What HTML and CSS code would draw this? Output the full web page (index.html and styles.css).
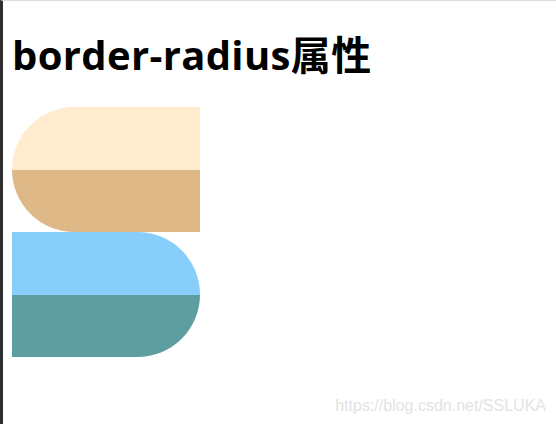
FILE: index.html
```html
<!DOCTYPE html>
<html lang="zh">
<head>
<meta charset="utf-8">
<title>border-radius属性</title>
<link rel="stylesheet" href="styles.css">
</head>
<body>
<div class="frame">
  <h1 class="title">border-radius属性</h1>
  <div class="shapes">
    <div class="shape shape-left">
      <div class="half almond"></div>
      <div class="half burly"></div>
    </div>
    <div class="shape shape-right">
      <div class="half sky"></div>
      <div class="half cadet"></div>
    </div>
  </div>
  <div class="watermark">https://blog.csdn.net/SSLUKA</div>
</div>
</body>
</html>
```
FILE: styles.css
```css
html, body {
  margin: 0;
  padding: 0;
  background: #ffffff;
}
.frame {
  position: relative;
  box-sizing: border-box;
  height: 424px;
  border-top: 1px solid #dcdcdc;
  border-left: 3px solid #2e2e2e;
  padding-left: 9px;
  padding-top: 1px;
  overflow: hidden;
}
.title {
  margin: 26px 0 26px 0;
  font-family: "Open Sans", "Noto Sans CJK SC", sans-serif;
  font-size: 40px;
  font-weight: 700;
  line-height: 53px;
  letter-spacing: 0.35px;
  color: #000;
}
.shapes {
  display: flex;
  flex-direction: column;
}
.shape {
  width: 188px;
  height: 125px;
  overflow: hidden;
  display: flex;
  flex-direction: column;
}
.shape-left {
  border-radius: 62.5px 0 0 62.5px;
}
.shape-right {
  border-radius: 0 62.5px 62.5px 0;
}
.half {
  flex: 1;
}
.almond { background: #ffebcd; }
.burly { background: #deb887; }
.sky { background: #87cefa; }
.cadet { background: #5f9ea0; }
.watermark {
  position: absolute;
  right: 10px;
  bottom: 9px;
  font-family: "Liberation Sans", Arial, sans-serif;
  font-size: 16px;
  color: #e3e3e3;
}
```
